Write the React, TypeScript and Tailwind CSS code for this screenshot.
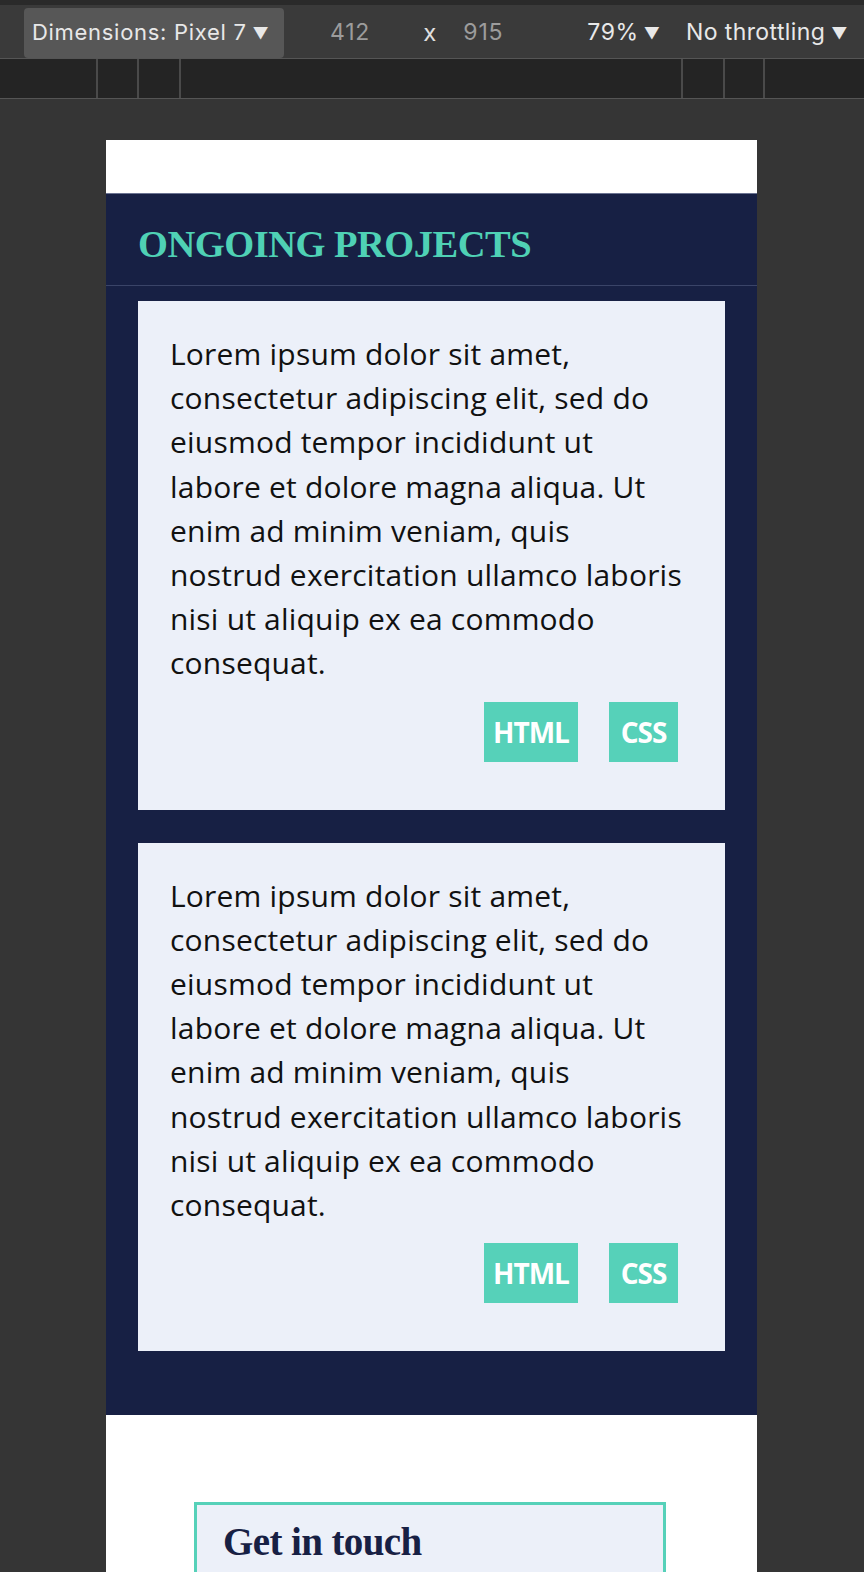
const BODY = [
  "Lorem ipsum dolor sit amet,",
  "consectetur adipiscing elit, sed do",
  "eiusmod tempor incididunt ut",
  "labore et dolore magna aliqua. Ut",
  "enim ad minim veniam, quis",
  "nostrud exercitation ullamco laboris",
  "nisi ut aliquip ex ea commodo",
  "consequat.",
];

function ProjectCard() {
  return (
    <div className="bg-[#ecf0f9] pl-[32px] pr-[32px] pt-[31px] pb-[48px]">
      <p className="font-['Open_Sans',sans-serif] text-[30px] leading-[44.2px] tracking-[0.2px] text-[#111111]">
        {BODY.map((line, i) => (
          <span key={i} className="block whitespace-nowrap">
            {line}
          </span>
        ))}
      </p>
      <div className="mt-[16px] flex justify-end gap-[31px] pr-[15px]">
        <span className="flex h-[60px] w-[94px] items-center justify-center bg-[#56d1b9] font-['Open_Sans',sans-serif] text-[28px] font-bold tracking-[-1px] text-white">
          HTML
        </span>
        <span className="flex h-[60px] w-[69px] items-center justify-center bg-[#56d1b9] font-['Open_Sans',sans-serif] text-[28px] font-bold tracking-[-1px] text-white">
          CSS
        </span>
      </div>
    </div>
  );
}

export default function App() {
  return (
    <div className="flex h-[1572px] w-[864px] flex-col overflow-hidden bg-[#353535] font-['Inter',sans-serif]">
      {/* devtools toolbar */}
      <div className="flex h-[59px] shrink-0 items-center border-t-[5px] border-b border-t-[#2a2a2a] border-b-[#555555] bg-[#3a3a3a] pl-[24px] pt-[2px]">
        <div className="flex h-[50px] w-[260px] items-center rounded-[4px] bg-[#575757] px-[8px] text-[22px] tracking-[0.7px] text-[#e8e8e8]">
          Dimensions: Pixel 7 <span className="ml-[6px] text-[16px]">▼</span>
        </div>
        <span className="ml-[46px] text-[23px] tracking-[0.8px] text-[#9c9c9c]">412</span>
        <span className="ml-[53px] text-[24px] text-[#e0e0e0]">x</span>
        <span className="ml-[27px] text-[23px] tracking-[0.8px] text-[#9c9c9c]">915</span>
        <span className="ml-[84px] text-[23px] tracking-[0.6px] text-[#e8e8e8]">79%</span>
        <span className="ml-[5px] text-[16px] text-[#e8e8e8]">▼</span>
        <span className="ml-[26px] text-[23px] tracking-[0.4px] text-[#e8e8e8]">No throttling</span>
        <span className="ml-[6px] text-[16px] text-[#e8e8e8]">▼</span>
      </div>

      {/* ruler strip */}
      <div className="flex h-[40px] shrink-0 border-b border-[#555555] bg-[#242424]">
        <div className="ml-[96px] w-[43px] border-x-[2px] border-[#4a4a4a]" />
        <div className="w-[42px] border-r-[2px] border-[#4a4a4a]" />
        <div className="ml-[500px] w-[44px] border-x-[2px] border-[#4a4a4a]" />
        <div className="w-[40px] border-r-[2px] border-[#4a4a4a]" />
      </div>

      {/* emulated page */}
      <div className="ml-[106px] mt-[41px] w-[651px] shrink-0 bg-white">
        <div className="h-[54px] border-b border-[#6b7391] bg-white" />

        <section className="bg-[#172044] pb-[64px]">
          <div className="flex h-[92px] items-center border-b border-[#3a4468] pl-[32px] pt-[10px]">
            <h2 className="font-['Liberation_Serif',serif] text-[38.5px] font-bold tracking-[-0.5px] text-[#4fd1b5]">
              ONGOING PROJECTS
            </h2>
          </div>
          <div className="mx-[32px] mt-[15px] flex flex-col gap-[33px]">
            <ProjectCard />
            <ProjectCard />
          </div>
        </section>

        <section className="h-[200px] bg-white pl-[88px] pt-[87px]">
          <div className="h-[120px] w-[472px] border-[3px] border-[#56d1b9] bg-[#ecf0f9] pl-[26px] pt-[8px]">
            <h3 className="font-['Liberation_Serif',serif] text-[39px] font-bold tracking-[-0.6px] text-[#172044]">
              Get in touch
            </h3>
          </div>
        </section>
      </div>
    </div>
  );
}
